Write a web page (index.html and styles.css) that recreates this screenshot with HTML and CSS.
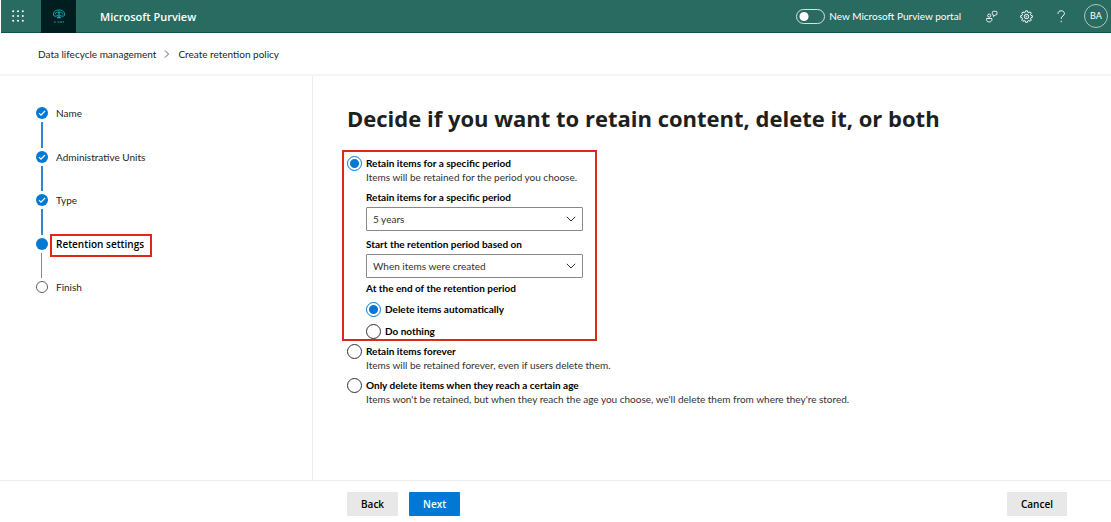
FILE: index.html
```html
<!DOCTYPE html>
<html lang="en">
<head>
<meta charset="utf-8">
<meta name="viewport" content="width=device-width, initial-scale=1">
<title>Create retention policy - Microsoft Purview</title>
<link rel="stylesheet" href="styles.css">
</head>
<body class="app">
<header class="topbar">
  <button class="launcher" type="button" aria-label="App launcher">
    <svg width="12" height="12" viewBox="0 0 12 12" fill="#fff"><circle cx="1.2" cy="1.2" r="1"/><circle cx="6" cy="1.2" r="1"/><circle cx="10.8" cy="1.2" r="1"/><circle cx="1.2" cy="6" r="1"/><circle cx="6" cy="6" r="1"/><circle cx="10.8" cy="6" r="1"/><circle cx="1.2" cy="10.8" r="1"/><circle cx="6" cy="10.8" r="1"/><circle cx="10.8" cy="10.8" r="1"/></svg>
  </button>
  <a class="brand" href="#" aria-label="Home">
    <svg width="14" height="15" viewBox="0 0 14 15" fill="none" stroke="#16a9b8" stroke-width="1"><path d="M1.500 6.500C1 2.800 3.500 1 7 1s6 1.800 5.500 5.500M3 5.500c.5-2 2-2.500 4-2.500s3.500.5 4 2.500M1.500 6.500c1.500 1.200 3.500.8 4.500-.5M12.500 6.500c-1.500 1.200-3.500.8-4.500-.5"/><path d="M7 3v5.500M5 8.500h4" stroke-width="1.300"/><path d="M2 13h1.500M5.500 13h6.500" stroke-width="1.200" stroke-dasharray="2 .6"/></svg>
  </a>
  <a class="product" href="#">Microsoft Purview</a>
  <label class="portal"><input class="switch" type="checkbox" role="switch"><span>New Microsoft Purview portal</span></label>
  <div class="tools">
    <button class="tool" type="button" aria-label="Feedback"><svg width="13" height="13" viewBox="0 0 13 13" fill="none" stroke="#fff" stroke-width=".9"><circle cx="4.200" cy="5.600" r="1.600"/><path d="M1.500 8.500h5.400v1c0 1.600-1.200 2.500-2.700 2.500s-2.700-.9-2.700-2.500zM7.300 3.800V2.500c0-.8.400-1.200 1.200-1.200h2.300c.8 0 1.200.4 1.200 1.200v1.300c0 .8-.4 1.200-1.200 1.200h-.6L8.500 6.600V5c-.8 0-1.200-.4-1.200-1.200z"/></svg></button>
    <button class="tool" type="button" aria-label="Settings"><svg width="13" height="13" viewBox="0 0 13 13" fill="none" stroke="#fff" stroke-width="1" stroke-linejoin="round"><path d="M5.600.8h1.800l.4 1.500 1 .4 1.300-.8 1.200 1.200-.8 1.300.4 1 1.400.3v1.700l-1.400.4-.4 1 .8 1.300-1.200 1.200-1.300-.8-1 .4-.4 1.400H5.600l-.4-1.400-1-.4-1.300.8-1.200-1.200.8-1.300-.4-1L.7 7.400V5.700l1.400-.3.4-1-.8-1.300 1.200-1.200 1.300.8 1-.4z"/><circle cx="6.500" cy="6.500" r="2.200"/><circle cx="6.500" cy="6.500" r=".4"/></svg></button>
    <button class="tool" type="button" aria-label="Help"><svg width="13" height="13" viewBox="0 0 13 13" fill="none" stroke="#fff" stroke-width="1"><path d="M3 3.800C3 1.800 4.300.8 6.200.8s3.200 1 3.200 2.700c0 2.300-3.200 2.600-3.200 5.300M6.200 10.800v1.400"/></svg></button>
    <button class="avatar" type="button">BA</button>
  </div>
</header>
<nav class="crumbs" aria-label="Breadcrumb">
  <a href="#">Data lifecycle management</a>
  <svg width="6" height="8" viewBox="0 0 6 8" fill="none" stroke="#605e5c" stroke-width="1"><path d="M1 .5 4.500 4 1 7.500"/></svg>
  <a href="#">Create retention policy</a>
</nav>
<div class="body">
  <aside class="sidebar">
    <ol class="steps">
      <li class="step done"><span class="dot"><svg width="12" height="12" viewBox="0 0 12 12" fill="none" stroke="#fff" stroke-width="1.200"><path d="m3 6.200 2 2 4-4.200"/></svg></span><span class="name">Name</span></li>
      <li class="step done"><span class="dot"><svg width="12" height="12" viewBox="0 0 12 12" fill="none" stroke="#fff" stroke-width="1.200"><path d="m3 6.200 2 2 4-4.200"/></svg></span><span class="name">Administrative Units</span></li>
      <li class="step done"><span class="dot"><svg width="12" height="12" viewBox="0 0 12 12" fill="none" stroke="#fff" stroke-width="1.200"><path d="m3 6.200 2 2 4-4.200"/></svg></span><span class="name">Type</span></li>
      <li class="step current" aria-current="step"><span class="dot"></span><span class="name">Retention settings</span></li>
      <li class="step"><span class="dot"></span><span class="name">Finish</span></li>
    </ol>
  </aside>
  <main class="main">
    <h1 class="title">Decide if you want to retain content, delete it, or both</h1>
    <form class="options" id="policy">
      <section class="highlight">
        <div class="option">
          <input class="radio" type="radio" name="mode" id="specific" checked>
          <label for="specific">Retain items for a specific period</label>
          <p class="hint">Items will be retained for the period you choose.</p>
        </div>
        <div class="fields">
          <div class="field">
            <label for="period">Retain items for a specific period</label>
            <div class="picker"><select id="period"><option>5 years</option></select><svg width="10" height="6" viewBox="0 0 10 6" fill="none" stroke="#323130"><path d="m.8.8 4.200 4.200L9.200.8"/></svg></div>
          </div>
          <div class="field">
            <label for="start">Start the retention period based on</label>
            <div class="picker"><select id="start"><option>When items were created</option></select><svg width="10" height="6" viewBox="0 0 10 6" fill="none" stroke="#323130"><path d="m.8.8 4.200 4.200L9.200.8"/></svg></div>
          </div>
          <fieldset class="ending">
            <legend>At the end of the retention period</legend>
            <div class="option"><input class="radio" type="radio" name="ending" id="auto" checked><label for="auto">Delete items automatically</label></div>
            <div class="option"><input class="radio" type="radio" name="ending" id="nothing"><label for="nothing">Do nothing</label></div>
          </fieldset>
        </div>
      </section>
      <div class="option">
        <input class="radio" type="radio" name="mode" id="forever">
        <label for="forever">Retain items forever</label>
        <p class="hint">Items will be retained forever, even if users delete them.</p>
      </div>
      <div class="option">
        <input class="radio" type="radio" name="mode" id="age">
        <label for="age">Only delete items when they reach a certain age</label>
        <p class="hint">Items won't be retained, but when they reach the age you choose, we'll delete them from where they're stored.</p>
      </div>
    </form>
  </main>
</div>
<footer class="footer">
  <button class="button" type="button">Back</button>
  <button class="button primary" type="submit" form="policy">Next</button>
  <button class="button cancel" type="button">Cancel</button>
</footer>
</body>
</html>
```

FILE: styles.css
```css
* { box-sizing: border-box; }
.app {
  margin: 0;
  min-height: 100vh;
  display: flex;
  flex-direction: column;
  background: #fff;
  color: #201f1e;
  font: 10px/14px Lato, "Open Sans", sans-serif;
}
button, select { font: inherit; color: inherit; }
a { color: inherit; text-decoration: none; }
svg { display: block; }

.topbar {
  display: flex;
  align-items: center;
  height: 33px;
  margin-left: 1px;
  background: #296b60;
  border-bottom: 1px solid #0e5147;
  color: #fff;
}
.launcher, .tool { border: 0; padding: 0; background: none; display: grid; place-items: center; }
.launcher { width: 40px; height: 32px; padding-right: 6px; }
.brand { width: 35px; height: 33px; background: #001d20; display: grid; place-items: center; }
.product { margin-left: 24px; padding-top: 2px; font: 600 11px/14px "Open Sans", sans-serif; }
.portal { margin-left: auto; display: flex; align-items: center; gap: 4px; }
.switch {
  appearance: none;
  width: 29px;
  height: 15px;
  margin: 0;
  border: 1px solid #d5e4e1;
  border-radius: 8px;
  background: radial-gradient(circle at 7px 50%, #fff 4px, transparent 5px);
}
.tools { display: flex; align-items: center; margin-left: 24px; padding-right: 3px; gap: 22px; }
.tool { width: 13px; height: 13px; }
.avatar {
  width: 24px;
  height: 24px;
  margin-left: -6px;
  padding: 0;
  border: 1px solid #a9c8c2;
  border-radius: 50%;
  background: none;
  font-size: 9px;
  text-align: center;
}

.crumbs {
  display: flex;
  align-items: center;
  gap: 8px;
  height: 43px;
  padding: 1px 38px 0;
  border-bottom: 2px solid #f5f5f5;
}

.body { flex: 1; display: flex; }
.sidebar { width: 313px; border-right: 1px solid #eee; padding: 31px 0 0 36px; }
.steps {
  list-style: none;
  margin: 0;
  padding: 0;
  height: 218px;
  display: grid;
  grid-auto-rows: 1fr;
}
.step { display: flex; gap: 8px; position: relative; }
.dot { width: 12px; height: 12px; border-radius: 50%; border: 1px solid #605e5c; }
.done .dot, .current .dot { background: #0078d4; border: 0; }
.name { line-height: 12px; }
.step:not(:last-child)::after {
  content: "";
  position: absolute;
  left: 5px;
  top: 15px;
  bottom: 3px;
  width: 1px;
  background: #8a8886;
}
.step.done:not(:last-child)::after { width: 2px; background: #2b88d8; }
.current .name {
  align-self: flex-start;
  margin: -4px 0 0 -6px;
  padding: 2px 6px 5px 4px;
  border: 2px solid #dc2a1a;
  color: #000;
  font-family: "Open Sans", sans-serif;
  font-weight: 600;
}

.main { flex: 1; min-width: 0; padding: 25px 24px 24px 34px; }
.title { margin: 0; font: 700 22px/34px "Open Sans", sans-serif; color: #201f1e; }
.options { margin: 15px 0 0; display: grid; gap: 6px; }
.highlight {
  width: 255px;
  margin: 0 0 -3px -5px;
  padding: 4px 3px 1px;
  border: 2px solid #dc2a1a;
}
.option { display: grid; grid-template-columns: 15px 1fr; column-gap: 4px; align-items: center; }
.option label, .field label, .ending legend { font-weight: 700; color: #000; }
.radio {
  appearance: none;
  width: 15px;
  height: 15px;
  margin: -1px 0;
  border: 1px solid #323130;
  border-radius: 50%;
}
.radio:checked { border-color: #0078d4; background: radial-gradient(circle, #0078d4 4px, transparent 5px); }
.hint { grid-column: 2; margin: 0; color: #323130; }
.fields { margin: 6px 9px 0 19px; display: grid; gap: 6px; }
.field { display: grid; gap: 3px; }
.picker { display: grid; align-items: center; }
.picker > * { grid-area: 1 / 1; }
.picker svg { justify-self: end; margin-right: 7px; pointer-events: none; }
.picker select {
  appearance: none;
  width: 100%;
  height: 24px;
  margin: 0;
  padding: 0 24px 0 6px;
  border: 1px solid #8a8886;
  border-radius: 1px;
  background: #fff;
  color: #323130;
}
.ending { display: grid; gap: 8px; border: 0; margin: -3px 0 0; padding: 0; }
.ending legend { padding: 0; margin-bottom: 7px; }

.footer {
  display: flex;
  align-items: flex-start;
  gap: 11px;
  height: 42px;
  padding: 11px 44px 0 347px;
  border-top: 1px solid #eee;
}
.button {
  height: 24px;
  min-width: 50px;
  padding: 0 14px;
  border: 0;
  border-radius: 1px;
  background: #e8e8e8;
  color: #000;
  font: 600 10px/14px "Open Sans", sans-serif;
}
.primary { background: #0078d4; color: #fff; }
.cancel { margin-left: auto; }
```
